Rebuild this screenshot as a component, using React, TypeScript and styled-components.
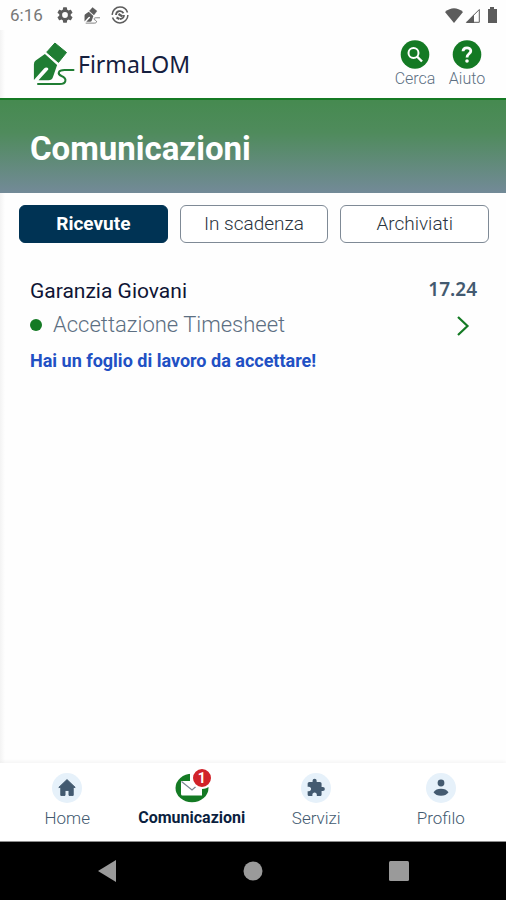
import React from "react";
import styled, { createGlobalStyle, css } from "styled-components";

const GlobalStyle = createGlobalStyle`
  *, *::before, *::after { box-sizing: border-box; }
  body {
    margin: 0;
    background: #fefefe;
    font-family: Roboto, "Liberation Sans", sans-serif;
    color: #17324d;
  }
  h1, h2, p { margin: 0; font-weight: inherit; }
  button { font: inherit; color: inherit; border: 0; padding: 0; background: none; cursor: pointer; }
  a { color: inherit; text-decoration: none; }
  svg { display: block; flex: none; }
`;

const Screen = styled.div`
  display: flex;
  flex-direction: column;
  min-height: 100vh;
`;

const StatusBar = styled.div`
  display: flex;
  align-items: center;
  justify-content: space-between;
  height: 30px;
  padding: 0 4px 0 10px;
  color: #5c5c5c;
`;

const StatusGroup = styled.div<{ $gap: number }>`
  display: flex;
  align-items: center;
  gap: ${(p) => p.$gap}px;
`;

const Clock = styled.span`
  font-size: 17px;
  line-height: 20px;
  color: #777;
  margin-right: 3px;
`;

const AppBody = styled.div`
  flex: 1;
  display: flex;
  flex-direction: column;
  background: linear-gradient(to right, #f3f3f3, #fefefe 5px);
`;

const Header = styled.header`
  display: flex;
  align-items: center;
  justify-content: space-between;
  height: 70px;
  padding: 0 19px 0 32px;
  border-bottom: 2px solid #157a24;
`;

const Brand = styled.a`
  display: flex;
  align-items: center;
  gap: 3px;
  font-family: "Noto Sans", sans-serif;
  font-size: 23px;
  line-height: 32px;
  color: #15203f;
`;

const HeaderActions = styled.div`
  display: flex;
  gap: 12px;
`;

const HeaderAction = styled.button`
  display: flex;
  flex-direction: column;
  align-items: center;
  width: 40px;
  padding-top: 1px;
  font-size: 16px;
  line-height: 20px;
  font-weight: 300;
  color: #5c6f82;
`;

const Hero = styled.div`
  padding: 26px 30px 22px;
  background: linear-gradient(to bottom, #468a50, #4f8b5c 35%, #738a98);
`;

const PageTitle = styled.h1`
  font-size: 33px;
  line-height: 45px;
  font-weight: 700;
  color: #fff;
`;

const Tabs = styled.div`
  display: grid;
  grid-template-columns: repeat(3, 1fr);
  gap: 12px;
  padding: 12px 17px 0 19px;
`;

const Tab = styled.button<{ $active?: boolean }>`
  height: 38px;
  border: 1px solid #7f8a96;
  border-radius: 6px;
  background: #fff;
  font-size: 19px;
  line-height: 24px;
  font-weight: 300;
  color: #2b3440;
  ${(p) =>
    p.$active &&
    css`
      border-color: #003354;
      background: #003354;
      color: #fff;
      font-weight: 700;
    `}
`;

const MessageList = styled.main`
  flex: 1;
  padding: 32px 29px 0 30px;
`;

const Message = styled.a`
  display: flex;
  justify-content: space-between;
`;

const MessageText = styled.div`
  display: flex;
  flex-direction: column;
`;

const Sender = styled.h2`
  font-size: 21px;
  line-height: 33px;
  color: #0f1535;
`;

const Subject = styled.p`
  display: flex;
  align-items: center;
  gap: 11px;
  font-size: 22px;
  line-height: 34px;
  font-weight: 300;
  color: #5c6f82;
`;

const UnreadDot = styled.span`
  width: 12px;
  height: 12px;
  border-radius: 50%;
  background: #147a24;
`;

const Notice = styled.p`
  font-size: 18px;
  line-height: 38px;
  font-weight: 700;
  color: #2150c4;
`;

const MessageMeta = styled.div`
  display: flex;
  flex-direction: column;
  align-items: flex-end;
`;

const Time = styled.time`
  font-family: "Noto Sans", sans-serif;
  font-size: 19px;
  line-height: 28px;
  font-weight: 600;
  color: #435a70;
`;

const Chevron = styled.svg`
  margin: 12px 7px 0 0;
`;

const BottomNav = styled.nav`
  display: grid;
  grid-template-columns: repeat(4, 1fr);
  height: 79px;
  padding: 5px 3px 0 5px;
  background: #fff;
  border-bottom: 1px solid #8d8d8d;
  box-shadow: 0 -1px 4px rgba(0, 0, 0, 0.05);
`;

const NavItem = styled.a<{ $active?: boolean }>`
  display: flex;
  flex-direction: column;
  align-items: center;
  font-size: ${(p) => (p.$active ? 16 : 17)}px;
  line-height: 20px;
  font-weight: ${(p) => (p.$active ? 700 : 300)};
  color: ${(p) => (p.$active ? "#0b1f3f" : "#435a70")};
`;

const IconBox = styled.span`
  position: relative;
  display: flex;
  align-items: center;
  justify-content: center;
  height: 40px;
`;

const Badge = styled.span`
  position: absolute;
  top: -1px;
  right: -4px;
  width: 22px;
  height: 22px;
  border: 2px solid #fff;
  border-radius: 50%;
  background: #d1232a;
  color: #fff;
  font-size: 14px;
  line-height: 18px;
  font-weight: 700;
  text-align: center;
`;

const SystemBar = styled.div`
  display: grid;
  grid-template-columns: repeat(3, 1fr);
  height: 58px;
  padding: 0 34px;
  background: #000;
`;

const SystemButton = styled.button`
  display: flex;
  align-items: center;
  justify-content: center;
`;

const PenLogo = ({ width, height, color }: { width: number; height: number; color: string }) => (
  <svg width={width} height={height} viewBox="0 0 42 44" aria-hidden="true">
    <path fill={color} d="M22.4 1 34 10.500 26 20.4 14.2 10.2Z" stroke={color} strokeLinejoin="round" />
    <path
      fill={color}
      d="M12.4 12 24.600 23 20.500 35Q19.400 38.200 16 38.200H6L15.800 27.600Q16.200 25.600 14 25.600 12.800 25.400 11.600 26.600L1.4 38V22.4Q1.4 19.600 3.200 18.400Z"
    />
    <path
      fill="none"
      stroke={color}
      strokeWidth="2"
      strokeLinecap="round"
      d="M41 28H32C25.500 28 24.500 32 29 34C35 36.500 34 42 27 42H5.5"
    />
  </svg>
);

const NAV_ICONS = {
  home: (
    <svg width="30" height="30" viewBox="0 0 30 30" aria-hidden="true">
      <circle cx="15" cy="15" r="15" fill="#e6f1fa" />
      <path
        fill="#435a70"
        stroke="#435a70"
        strokeLinejoin="round"
        d="M15 6.6 23.2 14.4H21.2V22.4H17V17.4H13V22.4H8.8V14.4H6.8Z"
      />
    </svg>
  ),
  mail: (
    <svg width="34" height="30" viewBox="0 0 34 30" aria-hidden="true">
      <ellipse cx="17" cy="15" rx="16.500" ry="14.300" fill="#147a24" />
      <path fill="#fff" d="M15 0H34V14H15Z" />
      <path fill="#fff" d="M6 8H27V22.500H7.500Q6 22.500 6 21Z" />
      <path fill="none" stroke="#7b8794" strokeWidth="1.200" d="M6.500 8.500 17 17 21.500 13" />
    </svg>
  ),
  puzzle: (
    <svg width="30" height="30" viewBox="0 0 30 30" aria-hidden="true">
      <circle cx="15" cy="15" r="15" fill="#e6f1fa" />
      <path
        fill="#435a70"
        transform="translate(5 5) scale(.82)"
        d="M20.5 11H19V7c0-1.100-.9-2-2-2h-4V3.500a2.500 2.500 0 0 0-5 0V5H4c-1.100 0-1.990.9-1.990 2v3.800H3.500c1.490 0 2.700 1.210 2.700 2.700s-1.210 2.700-2.700 2.700H2V20c0 1.100.9 2 2 2h3.800v-1.500c0-1.490 1.210-2.700 2.700-2.700s2.700 1.210 2.700 2.700V22H17c1.100 0 2-.9 2-2v-4h1.500a2.500 2.500 0 0 0 0-5z"
      />
    </svg>
  ),
  profile: (
    <svg width="30" height="30" viewBox="0 0 30 30" aria-hidden="true">
      <circle cx="15" cy="15" r="15" fill="#e6f1fa" />
      <circle cx="15" cy="10" r="3.400" fill="#435a70" />
      <path fill="#435a70" d="M7.500 19.200Q10 15.800 15 15.800T22.500 19.200Q20 22.800 15 22.800T7.500 19.200Z" />
    </svg>
  ),
};

const NAV: { label: string; icon: keyof typeof NAV_ICONS; badge?: number }[] = [
  { label: "Home", icon: "home" },
  { label: "Comunicazioni", icon: "mail", badge: 1 },
  { label: "Servizi", icon: "puzzle" },
  { label: "Profilo", icon: "profile" },
];

const TABS = ["Ricevute", "In scadenza", "Archiviati"];

export default function App() {
  const [tab, setTab] = React.useState(TABS[0]);

  return (
    <>
      <GlobalStyle />
      <Screen>
        <StatusBar>
          <StatusGroup $gap={11}>
            <Clock>6:16</Clock>
            <svg width="16" height="16" viewBox="2 2 20 20" aria-hidden="true">
              <path
                fill="#5c5c5c"
                fillRule="evenodd"
                d="M19.140 12.940c.04-.3.060-.61.060-.94s-.02-.64-.07-.94l2.030-1.580a.49.49 0 0 0 .12-.61l-1.920-3.320a.49.49 0 0 0-.59-.22l-2.390.96c-.5-.38-1.030-.7-1.620-.94l-.36-2.540a.48.48 0 0 0-.48-.41h-3.840a.48.48 0 0 0-.47.41l-.36 2.540c-.59.24-1.130.57-1.620.94l-2.390-.96a.48.48 0 0 0-.59.22L2.740 8.870a.47.47 0 0 0 .12.610l2.030 1.580c-.05.3-.09.630-.09.940s.02.640.070.940l-2.030 1.580a.49.49 0 0 0-.12.610l1.920 3.320c.12.220.370.290.590.220l2.390-.96c.5.380 1.030.7 1.620.940l.36 2.540c.05.240.240.410.480.410h3.840c.24 0 .44-.17.470-.41l.36-2.540c.59-.24 1.130-.56 1.620-.94l2.390.96c.22.080.470 0 .59-.22l1.920-3.320a.47.47 0 0 0-.12-.61zM12 15.600A3.600 3.600 0 1 1 12 8.400a3.600 3.600 0 0 1 0 7.200z"
              />
            </svg>
            <PenLogo width={16} height={17} color="#5c5c5c" />
            <svg width="18" height="18" viewBox="0 0 18 18" fill="none" stroke="#5c5c5c" aria-hidden="true">
              <circle cx="9" cy="9" r="7.900" strokeWidth="1.500" strokeDasharray="22 2.800" />
              <path strokeWidth="1.800" d="M5 9A4 4 0 0 1 12.500 7.200M13 9A4 4 0 0 1 9 13" />
              <path strokeWidth="2.200" d="M7.500 8 11.500 10.500M5.500 11.500 8.500 13" />
            </svg>
          </StatusGroup>
          <StatusGroup $gap={2}>
            <svg width="18" height="15" viewBox="0 0 18 15" aria-hidden="true">
              <path fill="#5c5c5c" d="M0 4Q9-3.500 18 4L9 15Z" />
            </svg>
            <svg width="15" height="15" viewBox="0 0 15 15" aria-hidden="true">
              <path fill="none" stroke="#5c5c5c" d="M1.500 14.300 14.300 1.500V14.300Z" />
              <path fill="#5c5c5c" d="M1 15 9 6.500V15Z" />
            </svg>
            <svg width="20" height="16" viewBox="0 0 20 16" aria-hidden="true">
              <path fill="#5c5c5c" d="M8 0h4v2h3v14H6V2h2Z" />
            </svg>
          </StatusGroup>
        </StatusBar>

        <AppBody>
          <Header>
            <Brand href="#home">
              <PenLogo width={43} height={44} color="#1f7d33" />
              FirmaLOM
            </Brand>
            <HeaderActions>
              <HeaderAction>
                <svg width="30" height="29" viewBox="0 0 30 29" aria-hidden="true">
                  <circle cx="15" cy="14.500" r="14.300" fill="#147a24" />
                  <g fill="none" stroke="#fff" strokeWidth="2">
                    <circle cx="13.500" cy="13" r="5" />
                    <path strokeWidth="2.400" d="M17 16.500 22 21.500" />
                  </g>
                </svg>
                Cerca
              </HeaderAction>
              <HeaderAction>
                <svg width="30" height="29" viewBox="0 0 30 29" aria-hidden="true">
                  <circle cx="15" cy="14.500" r="14.300" fill="#147a24" />
                  <path
                    fill="none"
                    stroke="#fff"
                    strokeWidth="2.800"
                    d="M11 11.200C11.200 6.800 18.800 6.800 18.800 11C18.800 13.800 15 13.800 15 17.400"
                  />
                  <circle cx="15" cy="21" r="1.800" fill="#fff" />
                </svg>
                Aiuto
              </HeaderAction>
            </HeaderActions>
          </Header>

          <Hero>
            <PageTitle>Comunicazioni</PageTitle>
          </Hero>

          <Tabs>
            {TABS.map((name) => (
              <Tab key={name} $active={name === tab} aria-pressed={name === tab} onClick={() => setTab(name)}>
                {name}
              </Tab>
            ))}
          </Tabs>

          <MessageList>
            <Message href="#timesheet">
              <MessageText>
                <Sender>Garanzia Giovani</Sender>
                <Subject>
                  <UnreadDot />
                  Accettazione Timesheet
                </Subject>
                <Notice>Hai un foglio di lavoro da accettare!</Notice>
              </MessageText>
              <MessageMeta>
                <Time>17.24</Time>
                <Chevron width="14" height="22" viewBox="0 0 14 22" aria-hidden="true">
                  <path fill="none" stroke="#147a24" strokeWidth="2.200" d="M2 2 11.500 11 2 20" />
                </Chevron>
              </MessageMeta>
            </Message>
          </MessageList>
        </AppBody>

        <BottomNav>
          {NAV.map(({ label, icon, badge }) => (
            <NavItem key={label} href={"#" + label.toLowerCase()} $active={label === "Comunicazioni"}>
              <IconBox>
                {NAV_ICONS[icon]}
                {badge && <Badge>{badge}</Badge>}
              </IconBox>
              {label}
            </NavItem>
          ))}
        </BottomNav>

        <SystemBar>
          <SystemButton aria-label="Back">
            <svg width="18" height="22" viewBox="0 0 18 22" aria-hidden="true">
              <path fill="#9a9a9a" d="M18 0V22L0 11Z" />
            </svg>
          </SystemButton>
          <SystemButton aria-label="Home screen">
            <svg width="20" height="20" viewBox="0 0 20 20" aria-hidden="true">
              <circle cx="10" cy="10" r="9.500" fill="#9a9a9a" />
            </svg>
          </SystemButton>
          <SystemButton aria-label="Recent apps">
            <svg width="20" height="20" viewBox="0 0 20 20" aria-hidden="true">
              <rect width="20" height="20" rx="1.500" fill="#9a9a9a" />
            </svg>
          </SystemButton>
        </SystemBar>
      </Screen>
    </>
  );
}
